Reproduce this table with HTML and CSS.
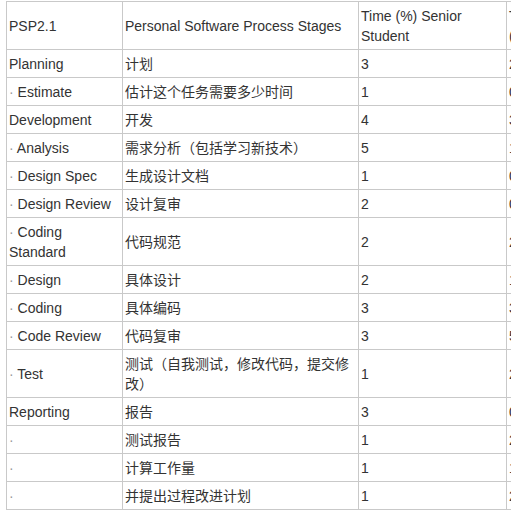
FILE: index.html
```html
<!DOCTYPE html>
<html lang="zh-CN">
<head>
<meta charset="utf-8">
<title>PSP</title>
<link rel="stylesheet" href="styles.css">
</head>
<body>
<div class="page">
<table class="psp">
  <colgroup>
    <col class="c1"><col class="c2"><col class="c3"><col class="c4">
  </colgroup>
  <tbody>
    <tr><td>PSP2.1</td><td>Personal Software Process Stages</td><td>Time (%) Senior Student</td><td>Time<br>(%) SDE</td></tr>
    <tr><td>Planning</td><td>计划</td><td>3</td><td>2</td></tr>
    <tr><td><span class="dot">·</span> Estimate</td><td>估计这个任务需要多少时间</td><td>1</td><td>0</td></tr>
    <tr><td>Development</td><td>开发</td><td>4</td><td>3</td></tr>
    <tr><td><span class="dot">·</span> Analysis</td><td>需求分析（包括学习新技术）</td><td>5</td><td>1</td></tr>
    <tr><td><span class="dot">·</span> Design Spec</td><td>生成设计文档</td><td>1</td><td>0</td></tr>
    <tr><td><span class="dot">·</span> Design Review</td><td>设计复审</td><td>2</td><td>0</td></tr>
    <tr><td><span class="dot">·</span> Coding Standard</td><td>代码规范</td><td>2</td><td>2</td></tr>
    <tr><td><span class="dot">·</span> Design</td><td>具体设计</td><td>2</td><td>1</td></tr>
    <tr><td><span class="dot">·</span> Coding</td><td>具体编码</td><td>3</td><td>3</td></tr>
    <tr><td><span class="dot">·</span> Code Review</td><td>代码复审</td><td>3</td><td>5</td></tr>
    <tr><td><span class="dot">·</span> Test</td><td>测试（自我测试，修改代码，提交修改）</td><td>1</td><td>2</td></tr>
    <tr><td>Reporting</td><td>报告</td><td>3</td><td>0</td></tr>
    <tr><td><span class="dot">·</span></td><td>测试报告</td><td>1</td><td>2</td></tr>
    <tr><td><span class="dot">·</span></td><td>计算工作量</td><td>1</td><td>1</td></tr>
    <tr><td><span class="dot">·</span></td><td>并提出过程改进计划</td><td>1</td><td>2</td></tr>
  </tbody>
</table>
</div>
</body>
</html>
```
FILE: styles.css
```css
html, body {
  margin: 0;
  padding: 0;
  background: #fff;
  overflow: hidden;
}
.page {
  padding: 1px 0 0 6px;
  width: 600px;
}
.psp {
  border-collapse: collapse;
  table-layout: fixed;
  width: 562px;
  font-family: "Liberation Sans", Arial, "Noto Sans CJK SC", sans-serif;
  font-size: 14px;
  line-height: 20px;
  color: #333;
}
.c1 { width: 116px; }
.c2 { width: 236px; }
.c3 { width: 148px; }
.c4 { width: 62px; }
.psp td {
  border: 1px solid #c9c9c9;
  padding: 4px 2px 3px 2px;
  vertical-align: middle;
  text-align: left;
}
.dot {
  color: #999;
}
```
